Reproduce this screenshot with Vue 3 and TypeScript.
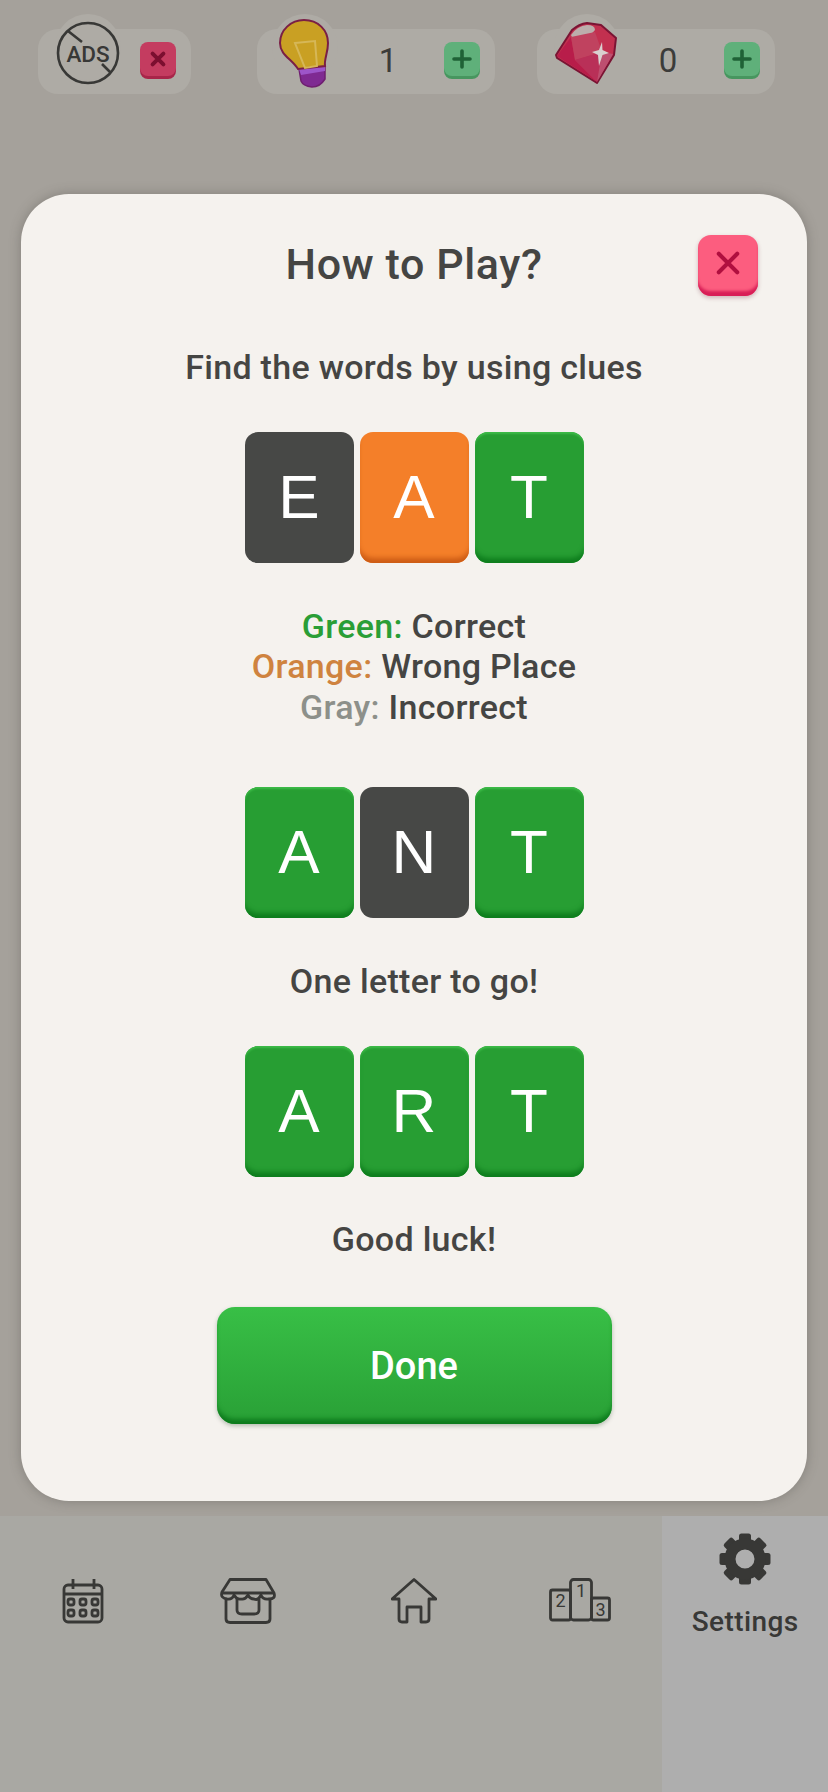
<script setup lang="ts">
interface Tile {
  letter: string
  tone: 'gray' | 'orange' | 'green'
}

const row = (letters: string, tones: Tile['tone'][]): Tile[] =>
  letters.split('').map((letter, i) => ({ letter, tone: tones[i] }))

const eat = row('EAT', ['gray', 'orange', 'green'])
const ant = row('ANT', ['green', 'gray', 'green'])
const art = row('ART', ['green', 'green', 'green'])

const gearTeeth = [0, 45, 90, 135, 180, 225, 270, 315]
</script>

<template>
  <div class="page">
    <header class="topbar">
      <div class="pill pill--ads">
        <span class="halo halo--ads"></span>
        <svg class="ads-icon" viewBox="0 0 64 64" width="64" height="64">
          <circle cx="32" cy="32" r="30" fill="none" stroke="#383836" stroke-width="2.6" />
          <path d="M12 10 L26 21 M46 43 L54 51" stroke="#383836" stroke-width="2.6" fill="none" />
          <text x="32" y="40.5" text-anchor="middle" class="ads-text">ADS</text>
        </svg>
        <button class="mini mini--red">
          <svg viewBox="0 0 20 20" width="18" height="18"><path d="M4 4 L16 16 M16 4 L4 16" stroke="#7c0f30" stroke-width="4.4" stroke-linecap="round" /></svg>
        </button>
      </div>

      <div class="pill pill--bulb">
        <span class="halo halo--bulb"></span>
        <svg class="bulb" viewBox="0 0 54 72" width="54" height="72">
          <path d="M21 50 L47 46 L47 60 Q42 68 34 68 Q25 67 23 62 Z" fill="#7f2a92" stroke="#6f1f70" stroke-width="1.5" />
          <path d="M21 50 L47 46 L47 52 L23 56 Z" fill="#9d55c9" />
          <path d="M20 50 C14 40 2 36 2 24 C2 11 13 1 26 1 C40 1 50 11 50 24 C50 34 46 40 47 47 Z" fill="#c9a023" stroke="#7a1f45" stroke-width="2" />
          <path d="M17 24 L37 22 L39 47 L27 49 Z" fill="none" stroke="#d6b757" stroke-width="2" />
        </svg>
        <span class="count">1</span>
        <button class="mini mini--green">
          <svg viewBox="0 0 20 20" width="20" height="20"><path d="M10 2 V18 M2 10 H18" stroke="#1f6236" stroke-width="3.6" stroke-linecap="round" /></svg>
        </button>
      </div>

      <div class="pill pill--gem">
        <span class="halo halo--gem"></span>
        <svg class="gem" viewBox="0 0 62 62" width="62" height="62">
          <path d="M1 33 L17 8 Q24 2 32 1 L46 3 L61 16 L59 33 L42 61 L2 36 Z" fill="#c2304f" stroke="#7a1434" stroke-width="2" stroke-linejoin="round" />
          <path d="M16 13 Q22 4 32 3 Q40 3 40 8 Q36 14 24 16 Q17 17 16 13 Z" fill="#bcaeac" />
          <path d="M2 34 L16 15 L20 38 L42 60 Z" fill="#b81d4a" />
          <path d="M16 15 L40 10 L47 30 L20 38 Z" fill="#c0425f" />
          <path d="M20 38 L47 30 L42 60 Z" fill="#b93058" />
          <path d="M47 30 L58 32 L42 60 Z" fill="#bd4f70" />
          <path d="M47 20 L47.5 28 L54 31 L47.5 33 L44 44 L43 33 L37 30 L44 28 Z" fill="#d9d0cf" />
        </svg>
        <span class="count">0</span>
        <button class="mini mini--green">
          <svg viewBox="0 0 20 20" width="20" height="20"><path d="M10 2 V18 M2 10 H18" stroke="#1f6236" stroke-width="3.6" stroke-linecap="round" /></svg>
        </button>
      </div>
    </header>

    <main class="modal">
      <h1 class="title">How to Play?</h1>
      <button class="close">
        <svg viewBox="0 0 26 26" width="24" height="24"><path d="M3 3 L23 23 M23 3 L3 23" stroke="#b00f3f" stroke-width="4.4" stroke-linecap="round" /></svg>
      </button>

      <p class="line line--intro">Find the words by using clues</p>

      <div class="tiles tiles--first">
        <div v-for="t in eat" :key="t.letter" class="tile" :class="`tile--${t.tone}`">{{ t.letter }}</div>
      </div>

      <div class="legend">
        <p class="line"><span class="c-green">Green:</span> Correct</p>
        <p class="line"><span class="c-orange">Orange:</span> Wrong Place</p>
        <p class="line"><span class="c-gray">Gray:</span> Incorrect</p>
      </div>

      <div class="tiles tiles--second">
        <div v-for="t in ant" :key="t.letter" class="tile" :class="`tile--${t.tone}`">{{ t.letter }}</div>
      </div>

      <p class="line line--one">One letter to go!</p>

      <div class="tiles tiles--third">
        <div v-for="t in art" :key="t.letter" class="tile" :class="`tile--${t.tone}`">{{ t.letter }}</div>
      </div>

      <p class="line line--luck">Good luck!</p>

      <button class="done">Done</button>
    </main>

    <nav class="nav">
      <div class="tab">
        <svg viewBox="0 0 42 46" width="42" height="46" fill="none" stroke="#383836" stroke-width="2.8">
          <rect x="2" y="7" width="38" height="37" rx="4" />
          <path d="M2 16 H40 M11 1 V11 M32 1 V11" />
          <rect x="6" y="21" width="6" height="6" rx="2" />
          <rect x="18" y="21" width="6" height="6" rx="2" />
          <rect x="30" y="21" width="6" height="6" rx="2" />
          <rect x="6" y="32" width="6" height="6" rx="2" />
          <rect x="18" y="32" width="6" height="6" rx="2" />
          <rect x="30" y="32" width="6" height="6" rx="2" />
        </svg>
      </div>
      <div class="tab">
        <svg viewBox="0 0 56 46" width="56" height="46" fill="none" stroke="#383836" stroke-width="2.8" stroke-linejoin="round">
          <path d="M10 1.5 H46 L54 15 Q56 21 49 21 Q43 22 41 17 Q38 23 34 21 Q30 21 28 17 Q25 22 21 21 Q17 22 14 17 Q12 22 7 21 Q0 20 2 14 Z" />
          <path d="M2 15 H54" />
          <path d="M6 21 V41 Q6 44.5 10 44.5 H46 Q50 44.5 50 41 V21" />
          <path d="M17 21 V32 Q17 36 22 36 H34 Q39 36 39 32 V21" />
        </svg>
      </div>
      <div class="tab">
        <svg viewBox="0 0 46 46" width="46" height="46" fill="none" stroke="#383836" stroke-width="2.8" stroke-linejoin="round">
          <path d="M1 21 L23 1.5 L45 21 L38 21 V41 Q38 44 35 44 H30 V29 H16 V44 H11 Q8 44 8 41 V21 Z" />
        </svg>
      </div>
      <div class="tab">
        <svg viewBox="0 0 62 44" width="62" height="44" fill="none" stroke="#383836" stroke-width="2.8">
          <rect x="1.5" y="12" width="20" height="30" rx="2" />
          <rect x="21.5" y="1.5" width="21" height="40.5" rx="3" />
          <rect x="42.5" y="20" width="18" height="22" rx="2" />
          <text x="11.5" y="29" text-anchor="middle" class="rank">2</text>
          <text x="32" y="19" text-anchor="middle" class="rank">1</text>
          <text x="51.5" y="38" text-anchor="middle" class="rank">3</text>
        </svg>
      </div>
      <div class="tab tab--active">
        <svg viewBox="0 0 52 52" width="52" height="52">
          <rect
            v-for="a in gearTeeth"
            :key="a"
            x="20"
            y="0.5"
            width="12"
            height="12"
            rx="2.5"
            fill="#383836"
            :transform="`rotate(${a} 26 26)`"
          />
          <circle cx="26" cy="26" r="15" fill="none" stroke="#383836" stroke-width="11" />
        </svg>
        <span class="tab__label">Settings</span>
      </div>
    </nav>
  </div>
</template>

<style>
html,
body {
  margin: 0;
  background: #a5a19b;
}
</style>

<style scoped>
.page {
  width: 828px;
  height: 1792px;
  display: flex;
  flex-direction: column;
  overflow: hidden;
  background: #a5a19b;
  font-family: Roboto, "Liberation Sans", sans-serif;
  color: #454543;
}

.topbar {
  height: 194px;
  box-sizing: border-box;
  padding: 29px 0 0 38px;
  display: flex;
  align-items: flex-start;
}

.pill {
  position: relative;
  height: 65px;
  border-radius: 20px;
  background: #aeaba5;
  display: flex;
  align-items: center;
}

.pill--ads {
  width: 153px;
  margin-right: 66px;
}

.pill--bulb {
  width: 238px;
  margin-right: 42px;
}

.pill--gem {
  width: 238px;
}

.halo {
  position: absolute;
  top: -15px;
  width: 66px;
  height: 66px;
  border-radius: 50%;
  background: #aeaba5;
}

.halo--ads {
  left: 17px;
}

.halo--bulb {
  left: 15px;
}

.halo--gem {
  left: 17px;
}

.ads-icon {
  position: absolute;
  left: 18px;
  top: -8px;
}

.ads-text {
  font: 500 22.5px Roboto, sans-serif;
  fill: #383836;
}

.bulb {
  position: absolute;
  left: 21px;
  top: -10px;
}

.gem {
  position: absolute;
  left: 18px;
  top: -7px;
}

.count {
  position: absolute;
  left: 113px;
  width: 36px;
  top: 13px;
  text-align: center;
  font-size: 33px;
  line-height: 38px;
  color: #3c3c3a;
}

.mini {
  position: absolute;
  top: 13px;
  width: 36px;
  height: 34px;
  padding: 0;
  border: 0;
  border-radius: 8px;
  display: flex;
  align-items: center;
  justify-content: center;
}

.mini--red {
  left: 102px;
  background: #c43c60;
  box-shadow: 0 3px 0 #a82549;
}

.mini--green {
  right: 15px;
  background: #5fb07a;
  box-shadow: 0 3px 0 #47965f;
}

.modal {
  position: relative;
  margin: 0 21px;
  height: 1307px;
  box-sizing: border-box;
  border-radius: 48px;
  background: #f5f2ee;
  box-shadow: 0 0 12px rgba(70, 65, 60, 0.35);
  display: flex;
  flex-direction: column;
  align-items: center;
  padding-top: 46px;
}

.title {
  margin: 0;
  font-size: 43px;
  line-height: 48px;
  font-weight: 500;
  letter-spacing: 0.6px;
  color: #454543;
}

.close {
  position: absolute;
  top: 41px;
  right: 49px;
  width: 60px;
  height: 61px;
  padding: 0 0 6px;
  border: 0;
  border-radius: 13px;
  background: #fc5d7f;
  box-shadow: inset 0 -6px 3px -1px #d81e57, 0 2px 4px rgba(120, 40, 60, 0.3);
  display: flex;
  align-items: center;
  justify-content: center;
}

.line {
  margin: 0;
  font-size: 34px;
  line-height: 40.5px;
  font-weight: 500;
  letter-spacing: 0.3px;
  text-align: center;
  color: #454543;
}

.c-green {
  color: #2a9e36;
}

.c-orange {
  color: #cf833f;
}

.c-gray {
  color: #8d908a;
}

.line--intro {
  margin-top: 59px;
}

.tiles {
  display: flex;
  gap: 6px;
}

.tiles--first {
  margin-top: 44px;
}

.tiles--second {
  margin-top: 60px;
}

.tiles--third {
  margin-top: 44px;
}

.legend {
  margin-top: 43px;
}

.line--one {
  margin-top: 43px;
}

.line--luck {
  margin-top: 42px;
}

.tile {
  width: 109px;
  height: 131px;
  box-sizing: border-box;
  border-radius: 13px;
  display: flex;
  align-items: center;
  justify-content: center;
  font-family: "Liberation Sans", Arial, sans-serif;
  font-size: 62px;
  color: #fff;
  padding-bottom: 2px;
}

.tile--gray {
  background: #474846;
}

.tile--orange {
  background: #f47f29;
  box-shadow: inset 0 -7px 5px -2px #cd5c15;
}

.tile--green {
  background: #279e33;
  box-shadow: inset 0 -7px 5px -2px #0e7d1d, inset 0 2px 2px #3dbb48;
}

.done {
  margin-top: 48px;
  width: 395px;
  height: 117px;
  padding: 0;
  border: 0;
  border-radius: 18px;
  background: linear-gradient(#38bf46, #29a036);
  box-shadow: inset 0 -7px 5px -2px #0c7a1c, 0 2px 4px rgba(60, 90, 60, 0.35);
  color: #fff;
  font-family: Roboto, sans-serif;
  font-size: 38px;
  font-weight: 500;
}

.nav {
  margin-top: 15px;
  flex: 1;
  display: flex;
  align-items: flex-start;
  background: #a9a8a3;
}

.tab {
  width: 165.6px;
  height: 100%;
  box-sizing: border-box;
  padding-top: 62px;
  display: flex;
  flex-direction: column;
  align-items: center;
}

.tab--active {
  background: #aeaeae;
  padding-top: 17px;
}

.tab__label {
  margin-top: 20px;
  font-size: 28px;
  line-height: 34px;
  font-weight: 500;
  letter-spacing: 0.4px;
  color: #383836;
}

.rank {
  font: 400 18px Roboto, sans-serif;
  fill: #383836;
  stroke: none;
}
</style>
